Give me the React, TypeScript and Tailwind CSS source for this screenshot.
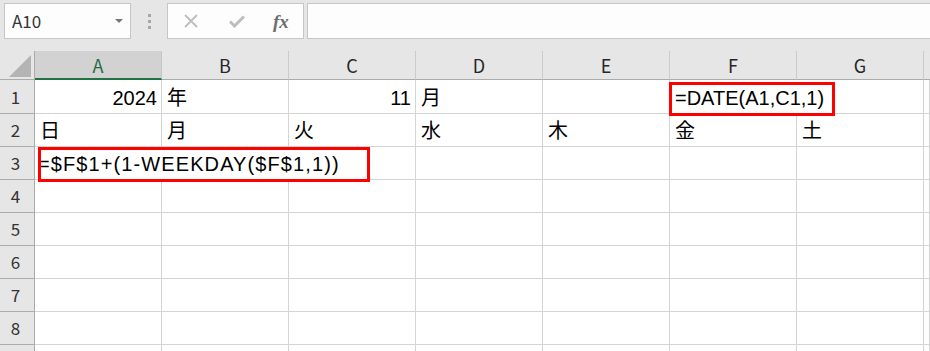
import React from 'react';

const cols = ['A', 'B', 'C', 'D', 'E', 'F', 'G'];
const days = ['日', '月', '火', '水', '木', '金', '土'];

const cellFont = { fontFamily: '"Liberation Sans", "Noto Sans CJK JP", sans-serif' };
const headFont = { fontFamily: '"Noto Sans CJK JP", "Noto Sans", sans-serif' };

function Cell({ children, right, span }: { children?: React.ReactNode; right?: boolean; span?: string }) {
  return (
    <div
      className={`flex items-end overflow-visible whitespace-nowrap border-r border-b border-[#d4d4d4] bg-white pb-[5px] text-[20px] leading-[20px] text-black ${
        right ? 'justify-end pr-[4px]' : 'pl-[5px]'
      } ${span ?? ''}`}
      style={cellFont}
    >
      {children}
    </div>
  );
}

function RowHead({ n }: { n?: number }) {
  return (
    <div
      className="flex items-center justify-center border-r border-b border-[#ababab] bg-[#e6e6e6] pr-[3px] text-[17px] text-[#333]"
      style={headFont}
    >
      {n}
    </div>
  );
}

function Toolbar() {
  return (
    <div className="flex h-[51px] items-start bg-[#e6e6e6] pt-[3px]">
      <div className="ml-[4px] flex h-[36px] w-[127px] items-center justify-between border border-[#c6c6c6] bg-[#fdfdfd] pl-[7px] pr-[7px]">
        <span className="text-[17px] text-[#333]" style={headFont}>A10</span>
        <svg width="8" height="5" viewBox="0 0 8 5"><path d="M0 0h8L4 4z" fill="#777" /></svg>
      </div>
      <div className="ml-[17px] mt-[11px] flex flex-col gap-[3px]">
        <span className="h-[3px] w-[3px] bg-[#a6a6a6]" />
        <span className="h-[3px] w-[3px] bg-[#a6a6a6]" />
        <span className="h-[3px] w-[3px] bg-[#a6a6a6]" />
      </div>
      <div className="ml-[16px] flex h-[36px] w-[137px] items-center border border-[#c6c6c6] bg-[#fdfdfd]">
        <svg className="ml-[16px]" width="14" height="14" viewBox="0 0 14 14">
          <path d="M1 1L13 13M13 1L1 13" stroke="#bdbdbd" strokeWidth="1.8" />
        </svg>
        <svg className="ml-[31px]" width="16" height="13" viewBox="0 0 16 13">
          <path d="M1 6.5L5.5 11L15 1.5" stroke="#bdbdbd" strokeWidth="3" fill="none" />
        </svg>
        <span
          className="ml-[28px] text-[19px] font-bold italic leading-none text-[#6e6e6e]"
          style={{ fontFamily: '"Liberation Serif", serif' }}
        >
          fx
        </span>
      </div>
      <div className="ml-[3px] h-[36px] flex-1 border border-r-0 border-[#c6c6c6] bg-[#fdfdfd]" />
    </div>
  );
}

export default function App() {
  return (
    <div className="h-[351px] w-[930px] overflow-hidden bg-[#e6e6e6]">
      <Toolbar />
      <div className="relative">
        <div className="grid grid-cols-[35px_repeat(7,127px)_1fr] grid-rows-[29px_34px_repeat(8,33px)]">
          {/* header row */}
          <div className="relative border-r border-b border-[#ababab] bg-[#e6e6e6]">
            <svg className="absolute left-[9px] top-[4px]" width="23" height="23" viewBox="0 0 23 23">
              <path d="M0 22H22V0z" fill="#b4b4b4" />
            </svg>
          </div>
          {cols.map((c, i) => (
            <div
              key={c}
              className={`flex items-center justify-center border-r text-[18px] ${
                i === 0
                  ? 'border-b-2 border-r-[#c6c6c6] border-b-[#217346] bg-[#d2d2d2] pt-[2px] text-[#1e6b42]'
                  : 'border-b border-r-[#cbcbcb] border-b-[#ababab] bg-[#e6e6e6] pt-[1px] text-[#262626]'
              }`}
              style={headFont}
            >
              {c}
            </div>
          ))}
          <div className="border-b border-[#ababab] bg-[#e6e6e6]" />

          {/* row 1 */}
          <RowHead n={1} />
          <Cell right>2024</Cell>
          <Cell>年</Cell>
          <Cell right>11</Cell>
          <Cell>月</Cell>
          <Cell />
          <Cell span="col-span-2">=DATE(A1,C1,1)</Cell>
          <Cell />

          {/* row 2 */}
          <RowHead n={2} />
          {days.map((d) => (
            <Cell key={d}>{d}</Cell>
          ))}
          <Cell />

          {/* row 3 */}
          <RowHead n={3} />
          <Cell span="col-span-3 !pl-[3px] tracking-[1.1px]">=$F$1+(1-WEEKDAY($F$1,1))</Cell>
          <Cell />
          <Cell />
          <Cell />
          <Cell />
          <Cell />

          {[4, 5, 6, 7, 8, 9].map((n) => (
            <React.Fragment key={n}>
              <RowHead n={n < 9 ? n : undefined} />
              {cols.map((c) => (
                <Cell key={c} />
              ))}
              <Cell />
            </React.Fragment>
          ))}
        </div>

        {/* highlight boxes */}
        <div className="pointer-events-none absolute left-[669px] top-[31px] h-[34px] w-[166px] border-[3px] border-[#ff0000]" />
        <div className="pointer-events-none absolute left-[38px] top-[96px] h-[35px] w-[332px] border-[3px] border-[#ff0000]" />
      </div>
    </div>
  );
}
